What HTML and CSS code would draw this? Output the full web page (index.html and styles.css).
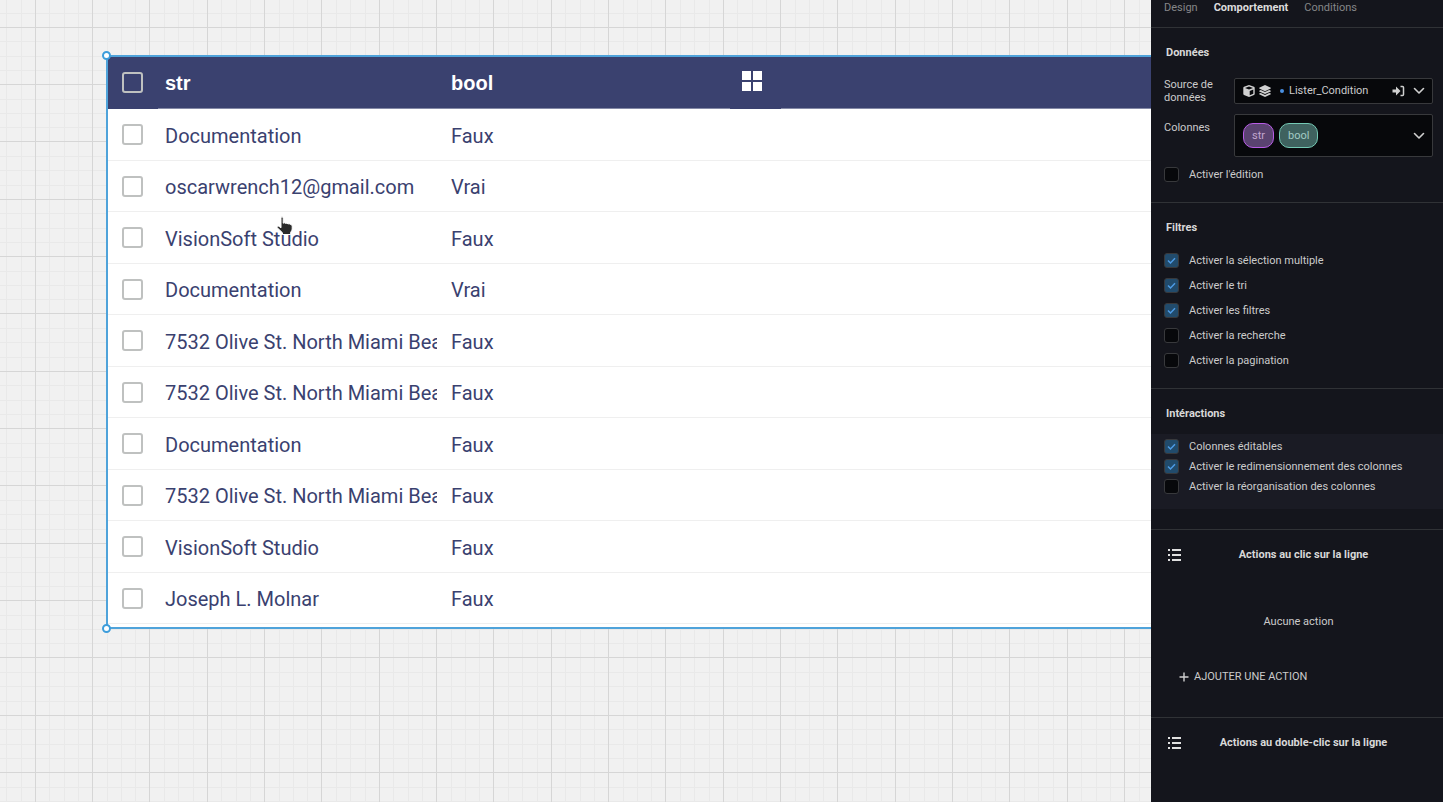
FILE: index.html
```
<!DOCTYPE html>
<html lang="fr">
<head>
  <meta charset="UTF-8">
  <meta name="viewport" content="width=device-width, initial-scale=1.0">
  <title>Comportement du tableau</title>
  <link rel="stylesheet" href="styles.css">
</head>
<body>
<main class="canvas">
  <svg class="grid" aria-hidden="true">
    <defs>
      <pattern id="gridLines" x="35" y="27" width="172" height="172" patternUnits="userSpaceOnUse">
        <path class="minor" d="M14.5 0V172M29.5 0V172M43.5 0V172M72.5 0V172M86.5 0V172M100.5 0V172M129.5 0V172M143.5 0V172M158.5 0V172M0 14.5H172M0 29.5H172M0 43.5H172M0 72.5H172M0 86.5H172M0 100.5H172M0 129.5H172M0 143.5H172M0 158.5H172"/>
        <path class="major" d="M.5 0V172M57.5 0V172M114.5 0V172M0 .5H172M0 57.5H172M0 114.5H172"/>
      </pattern>
    </defs>
    <rect width="100%" height="100%" fill="url(#gridLines)"/>
  </svg>
  <div class="frame">
    <span class="handle handle-top"></span>
    <span class="handle handle-bottom"></span>
    <table class="data">
      <thead>
      <tr>
        <th class="col-check"><input type="checkbox" aria-label="Tout sélectionner"></th>
        <th class="col-text">str</th>
        <th class="col-text">bool</th>
        <th class="col-add">
          <button type="button" aria-label="Gérer les colonnes">
            <svg width="20" height="20" viewBox="0 0 20 20"><path fill="#fff" d="M0 0h9v9H0zM11 0h9v9h-9zM0 11h9v9H0zM11 11h9v9h-9z"/></svg>
          </button>
        </th>
        <th></th>
      </tr>
      </thead>
      <tbody>
      <tr><td class="col-check"><input type="checkbox" aria-label="Ligne 1"></td><td><div class="cell">Documentation</div></td><td>Faux</td><td></td><td></td></tr>
      <tr><td class="col-check"><input type="checkbox" aria-label="Ligne 2"></td><td><div class="cell">oscarwrench12@gmail.com</div></td><td>Vrai</td><td></td><td></td></tr>
      <tr><td class="col-check"><input type="checkbox" aria-label="Ligne 3"></td><td><div class="cell">VisionSoft Studio</div></td><td>Faux</td><td></td><td></td></tr>
      <tr><td class="col-check"><input type="checkbox" aria-label="Ligne 4"></td><td><div class="cell">Documentation</div></td><td>Vrai</td><td></td><td></td></tr>
      <tr><td class="col-check"><input type="checkbox" aria-label="Ligne 5"></td><td><div class="cell">7532 Olive St. North Miami Bea</div></td><td>Faux</td><td></td><td></td></tr>
      <tr><td class="col-check"><input type="checkbox" aria-label="Ligne 6"></td><td><div class="cell">7532 Olive St. North Miami Bea</div></td><td>Faux</td><td></td><td></td></tr>
      <tr><td class="col-check"><input type="checkbox" aria-label="Ligne 7"></td><td><div class="cell">Documentation</div></td><td>Faux</td><td></td><td></td></tr>
      <tr><td class="col-check"><input type="checkbox" aria-label="Ligne 8"></td><td><div class="cell">7532 Olive St. North Miami Bea</div></td><td>Faux</td><td></td><td></td></tr>
      <tr><td class="col-check"><input type="checkbox" aria-label="Ligne 9"></td><td><div class="cell">VisionSoft Studio</div></td><td>Faux</td><td></td><td></td></tr>
      <tr><td class="col-check"><input type="checkbox" aria-label="Ligne 10"></td><td><div class="cell">Joseph L. Molnar</div></td><td>Faux</td><td></td><td></td></tr>
      </tbody>
    </table>
  </div>
  <svg class="pointer" width="18" height="20" viewBox="0 0 18 20" aria-hidden="true">
    <path fill="#2b2b2b" stroke="#fff" stroke-width="1" stroke-linejoin="round" d="M5 2.2Q5 .8 6 .8T7.200 2.200V7.200Q8.600 6.300 9.600 7.400Q11 6.700 12 7.900Q13.400 7.300 14.400 8.500Q16 8.300 16.200 10V13Q16 15 14.700 16.200V18.500H6.500V16.800L1 11.500Q1 9.800 2.800 10.200L5 11.800z"/>
  </svg>
</main>

<aside class="panel">
  <nav class="tabs">
    <button type="button">Design</button>
    <button type="button" class="active">Comportement</button>
    <button type="button">Conditions</button>
  </nav>

  <section>
    <h2>Données</h2>
    <div class="field">
      <label for="source">Source de données</label>
      <div class="box">
        <svg width="12" height="12" viewBox="0 0 12 12"><path fill="#d0d0d0" d="M6 0L11 1.800Q11.700 2.100 11.700 2.800V9Q11.700 9.700 11 10L6 12L1 10Q.3 9.700 .3 9V2.800Q.3 2.100 1 1.800z"/><path fill="#07080b" d="M6 1.500L10 3L6 4.600L2 3zM6.700 6L10.300 4.500V8.800L6.700 10.300z"/></svg>
        <svg class="layers" width="12" height="12" viewBox="0 0 12 12"><path fill="#d0d0d0" d="M6 0L11.800 2.700V3.500L6 6.200L.2 3.500V2.700zM.2 5.700L1.800 5L6 7L10.200 5L11.800 5.700V6.400L6 9.100L.2 6.400zM.2 8.600L1.800 7.900L6 9.900L10.200 7.900L11.800 8.600V9.300L6 12L.2 9.300z"/></svg>
        <span class="dot"></span>
        <select id="source"><option>Lister_Condition</option></select>
        <button type="button" class="icon" aria-label="Ouvrir la source">
          <svg width="13" height="12" viewBox="0 0 13 12"><path fill="#d0d0d0" d="M.5 4.500H4V1.500L8.500 6L4 10.500V7.500H.5z"/><path fill="none" stroke="#d0d0d0" stroke-width="1.500" d="M8.500 1.500H10.500Q11.500 1.500 11.500 2.500V9.500Q11.500 10.500 10.500 10.500H8.500"/></svg>
        </button>
        <svg width="12" height="8" viewBox="0 0 12 8"><path fill="none" stroke="#d0d0d0" stroke-width="1.600" stroke-linecap="round" stroke-linejoin="round" d="M1.500 1.500L6 6L10.500 1.500"/></svg>
      </div>
    </div>
    <div class="field">
      <label for="columns" class="label-tall">Colonnes</label>
      <button type="button" id="columns" class="box box-tall">
        <span class="chip chip-str">str</span>
        <span class="chip chip-bool">bool</span>
        <svg class="push" width="12" height="8" viewBox="0 0 12 8"><path fill="none" stroke="#d0d0d0" stroke-width="1.600" stroke-linecap="round" stroke-linejoin="round" d="M1.500 1.500L6 6L10.500 1.500"/></svg>
      </button>
    </div>
    <label class="check"><input type="checkbox"> Activer l'édition</label>
  </section>

  <section>
    <h2>Filtres</h2>
    <div class="checks">
      <label class="check"><input type="checkbox" checked> Activer la sélection multiple</label>
      <label class="check"><input type="checkbox" checked> Activer le tri</label>
      <label class="check"><input type="checkbox" checked> Activer les filtres</label>
      <label class="check"><input type="checkbox"> Activer la recherche</label>
      <label class="check"><input type="checkbox"> Activer la pagination</label>
    </div>
  </section>

  <section class="interactions">
    <h2>Intéractions</h2>
    <div class="checks compact">
      <label class="check"><input type="checkbox" checked> Colonnes éditables</label>
      <label class="check"><input type="checkbox" checked> Activer le redimensionnement des colonnes</label>
      <label class="check"><input type="checkbox"> Activer la réorganisation des colonnes</label>
    </div>
  </section>

  <section class="actions">
    <header>
      <svg width="13" height="12" viewBox="0 0 13 12"><path fill="#e0e0e0" d="M0 0h2v2H0zM0 5h2v2H0zM0 10h2v2H0zM4 0h9v2H4zM4 5h9v2H4zM4 10h9v2H4z"/></svg>
      <h2>Actions au clic sur la ligne</h2>
    </header>
    <p>Aucune action</p>
    <button type="button" class="add">
      <svg width="10" height="10" viewBox="0 0 10 10"><path stroke="#d0d0d0" stroke-width="1.400" d="M5 .5V9.500M.5 5H9.500"/></svg>
      AJOUTER UNE ACTION
    </button>
  </section>

  <section class="actions">
    <header>
      <svg width="13" height="12" viewBox="0 0 13 12"><path fill="#e0e0e0" d="M0 0h2v2H0zM0 5h2v2H0zM0 10h2v2H0zM4 0h9v2H4zM4 5h9v2H4zM4 10h9v2H4z"/></svg>
      <h2>Actions au double-clic sur la ligne</h2>
    </header>
  </section>
</aside>
</body>
</html>
```
FILE: styles.css
```
* {
  box-sizing: border-box;
}
body {
  margin: 0;
  display: flex;
  height: 100vh;
  overflow: hidden;
  font-family: Roboto, "Liberation Sans", sans-serif;
}
button {
  padding: 0;
  border: 0;
  background: none;
  color: inherit;
  font: inherit;
  cursor: pointer;
}
svg {
  display: block;
  flex: none;
}

/* canvas */
.canvas {
  position: relative;
  flex: 1;
  min-width: 0;
  overflow: hidden;
  padding: 55px 0 0 106px;
  background-color: #f1f1f1;
}
.grid {
  position: absolute;
  inset: 0;
  width: 100%;
  height: 100%;
}
.grid path {
  fill: none;
}
.minor {
  stroke: #e9e9e9;
}
.major {
  stroke: #d6d6d6;
}
.frame {
  position: relative;
  padding-bottom: 3px;
  border: 2px solid #4fa3da;
  border-right: 0;
  background-color: white;
}
.handle {
  position: absolute;
  left: -6px;
  width: 9px;
  height: 9px;
  border: 2px solid #3d9ddb;
  border-radius: 50%;
  background-color: white;
}
.handle-top {
  top: -6px;
}
.handle-bottom {
  bottom: -6px;
}
.pointer {
  position: absolute;
  left: 276px;
  top: 216px;
}

/* table */
.data {
  width: 100%;
  table-layout: fixed;
  border-collapse: separate;
  border-spacing: 0;
  color: #3a416f;
  font-size: 20px;
  line-height: 24px;
}
.data th {
  height: 52px;
  padding: 0 7px;
  background-color: #3a416f;
  border-bottom: 1px solid #8489a6;
  color: white;
  font-family: "Liberation Sans", Arial, sans-serif;
  text-align: left;
}
.data td {
  height: 52px;
  padding: 2px 7px 0;
  border-bottom: 1px solid #efefef;
}
.data tr:nth-child(even) td {
  height: 51px;
}
.data .col-check {
  width: 50px;
  padding: 0 0 0 14px;
}
.data .col-text {
  width: 286px;
}
.data .col-add {
  width: 51px;
  padding: 0 0 3px 12px;
}
.data th.col-check,
.data th.col-add {
  border-bottom-color: #3a416f;
}
.data input {
  appearance: none;
  display: block;
  width: 21px;
  height: 21px;
  margin: 0;
  border: 2px solid #bfc1c0;
  border-radius: 3px;
}
.data button {
  display: block;
}
.cell {
  overflow: hidden;
  white-space: nowrap;
}

/* panel */
.panel {
  flex: none;
  width: 292px;
  overflow: hidden;
  background-color: #14151c;
  color: #cbcbcb;
  font-size: 11px;
  line-height: 16px;
}
.tabs {
  display: flex;
  gap: 16px;
  padding: 0 13px 11px;
  color: #858688;
}
.tabs .active {
  color: #dcdcdc;
  font-weight: bold;
}
section {
  padding: 17px 13px 20px;
  border-top: 1px solid #303236;
}
h2 {
  margin: 0 2px 17px;
  color: #d8d8d8;
  font-size: 11px;
  line-height: 16px;
}
.field {
  display: flex;
  margin-bottom: 10px;
}
.field label {
  width: 70px;
  line-height: 13px;
}
.field .label-tall {
  padding-top: 7px;
}
.field .box {
  display: flex;
  align-items: center;
  flex: 1;
  min-width: 0;
  height: 26px;
  margin-right: -3px;
  padding: 0 7px 0 8px;
  border: 1px solid #38393c;
  border-radius: 2px;
  background-color: #07080b;
}
.field .box-tall {
  height: 43px;
  gap: 5px;
}
.box-tall .push {
  margin-left: auto;
}
.layers {
  margin-left: 4px;
}
.dot {
  width: 4px;
  height: 4px;
  margin: 0 5px 0 9px;
  border-radius: 50%;
  background-color: #4a90e2;
}
.box select {
  appearance: none;
  flex: 1;
  min-width: 0;
  padding: 0;
  border: 0;
  background: none;
  color: #cbcbcb;
  font: inherit;
}
.icon {
  margin-right: 8px;
}
.chip {
  height: 25px;
  padding: 0 8px;
  border: 1px solid;
  border-radius: 10px;
  line-height: 23px;
}
.chip-str {
  border-color: #b85ce6;
  background-color: #5a4370;
  color: #c3a6cf;
}
.chip-bool {
  border-color: #74c9b4;
  background-color: #3f625f;
  color: #a3cbc4;
}
.check {
  display: flex;
  align-items: center;
  gap: 10px;
  height: 15px;
}
.check input {
  appearance: none;
  flex: none;
  width: 15px;
  height: 15px;
  margin: 0;
  border: 1px solid #38393c;
  border-radius: 3px;
  background-color: #07080b;
}
.check input:checked {
  background: #214b6c url("data:image/svg+xml,%3Csvg xmlns='http://www.w3.org/2000/svg' viewBox='0 0 13 13'%3E%3Cpath d='M3 6.500L5.500 9L10 4.300' fill='none' stroke='%234d9be6' stroke-width='1.500'/%3E%3C/svg%3E");
}
.checks {
  display: flex;
  flex-direction: column;
  gap: 10px;
}
.compact {
  gap: 5px;
  padding: 5px 13px 15px;
  background-color: #1a1b24;
}
.interactions {
  padding-left: 0;
  padding-right: 0;
}
.interactions h2 {
  margin: 0 15px 12px;
}
.actions header {
  display: flex;
  align-items: center;
  padding: 0 4px;
}
.actions header h2 {
  flex: 1;
  margin: 0;
  text-align: center;
}
.actions p {
  margin: 51px 0 39px;
  padding-left: 3px;
  text-align: center;
}
.add {
  display: flex;
  align-items: center;
  gap: 5px;
  margin: 0 0 12px 15px;
}
```
